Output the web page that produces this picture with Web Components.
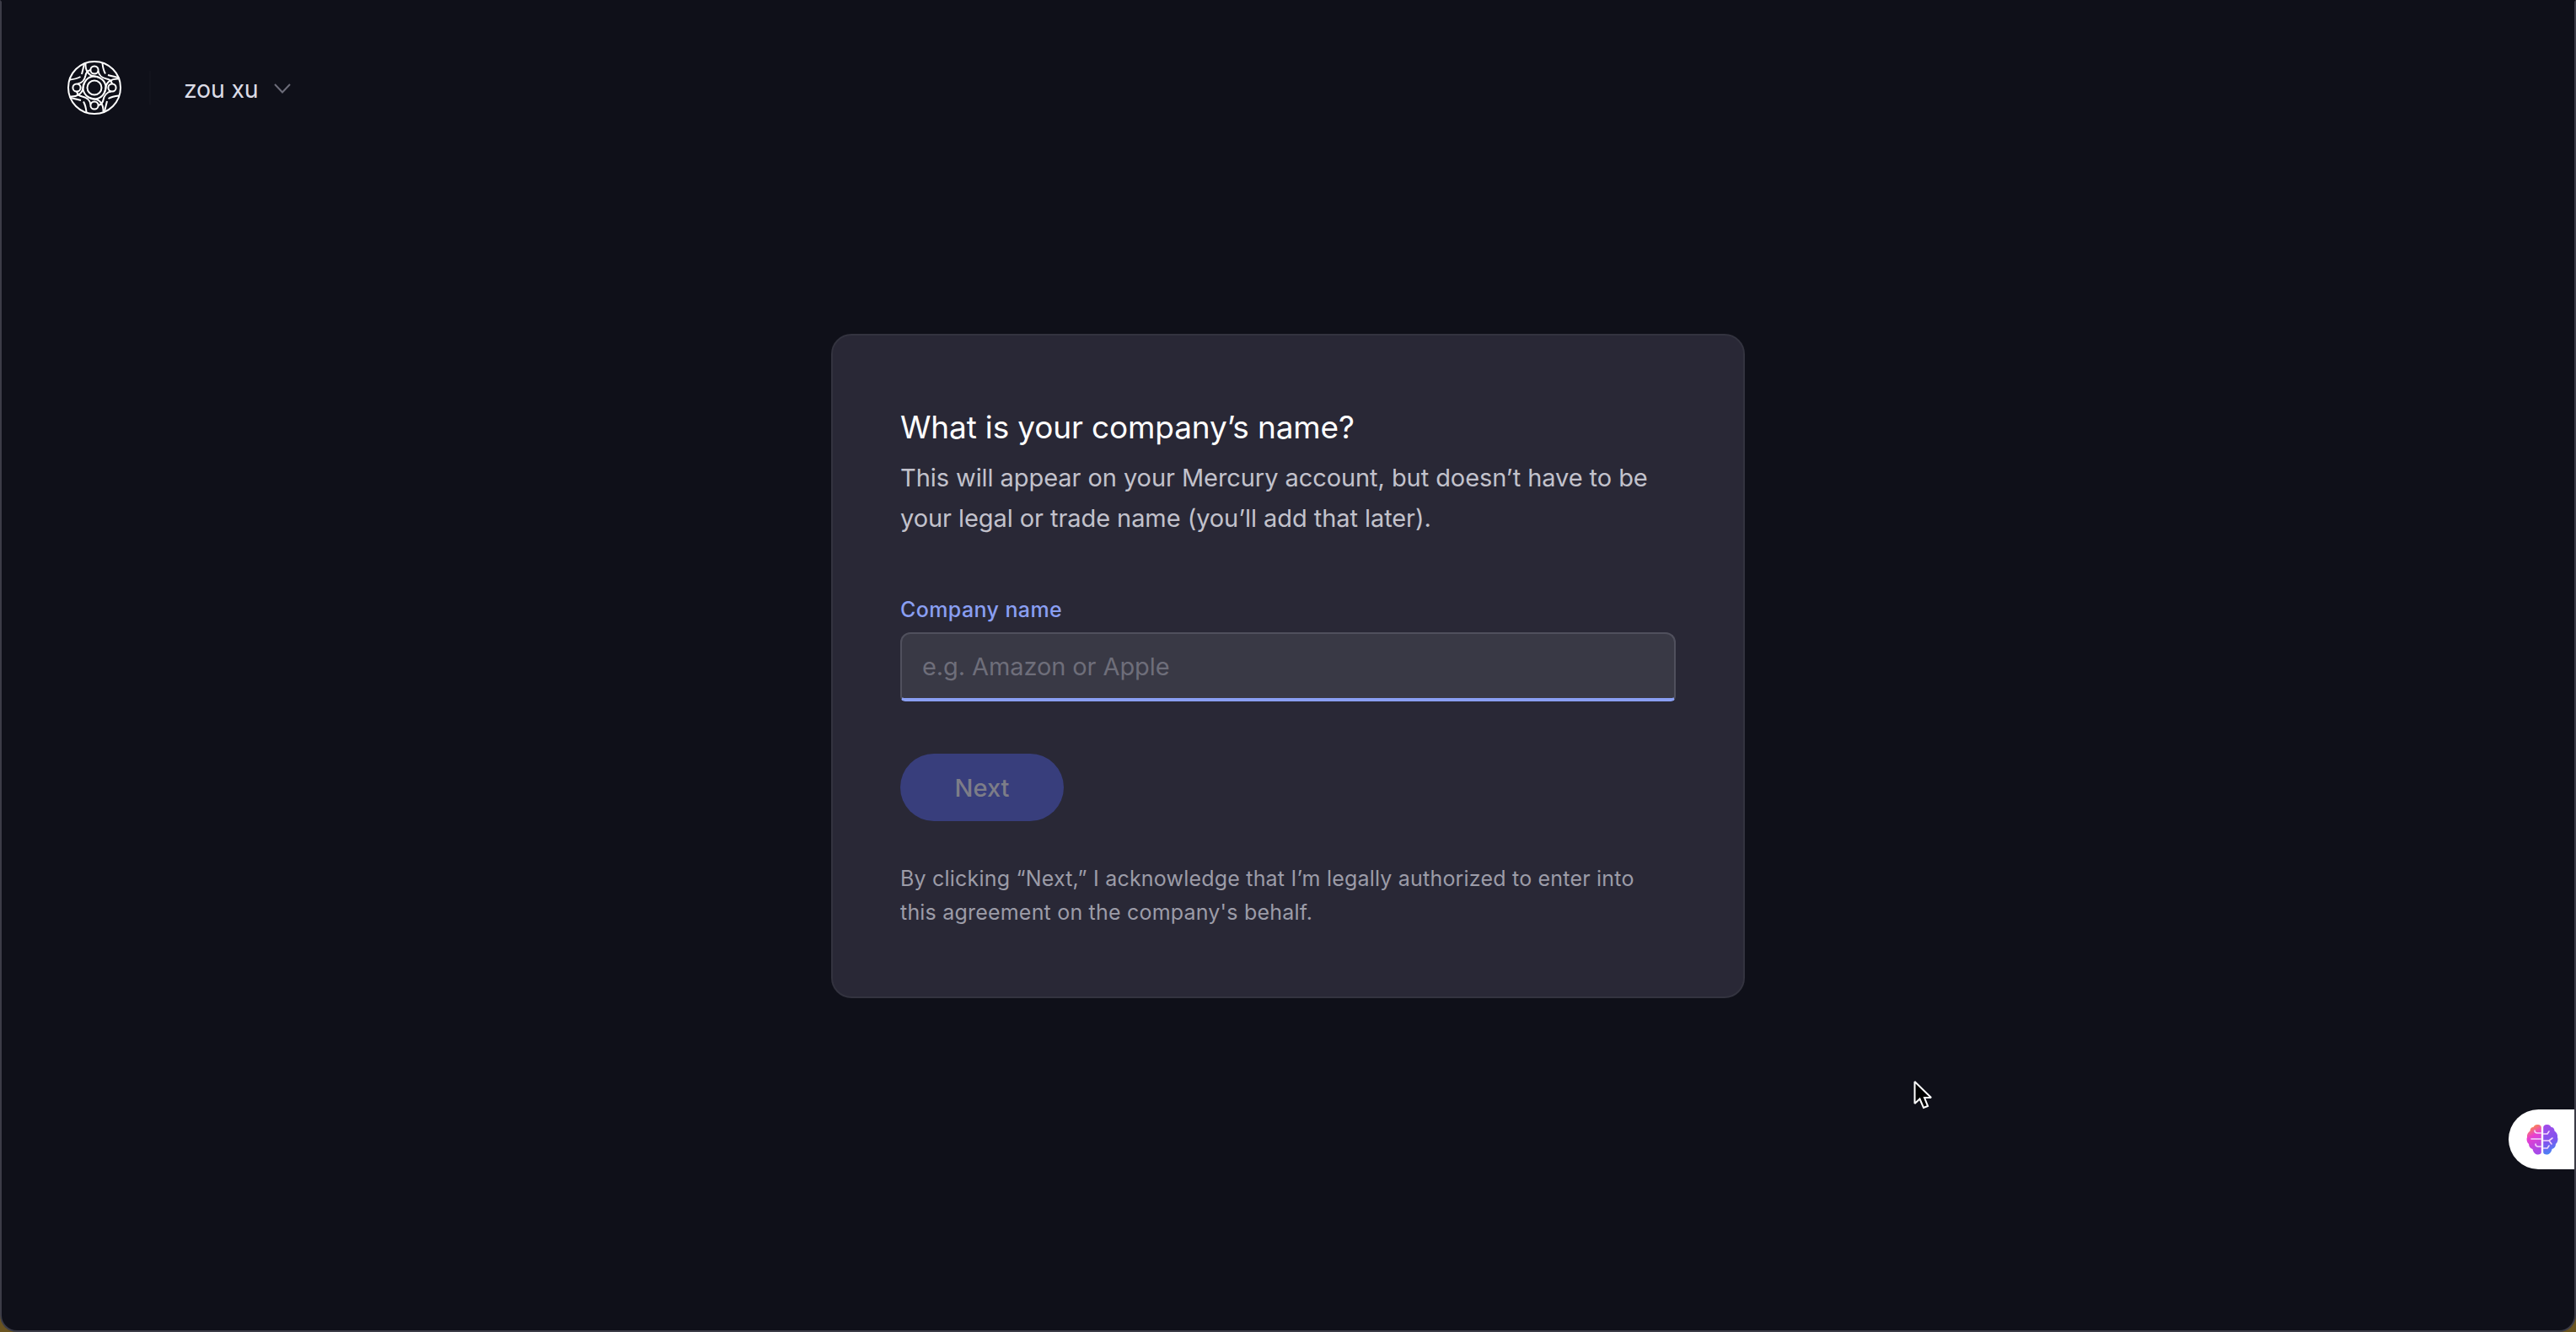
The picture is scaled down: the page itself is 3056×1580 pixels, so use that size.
<!DOCTYPE html>
<html lang="en">
<head>
<meta charset="utf-8">
<title>Company name</title>
<style>
  html, body { margin: 0; height: 100%; background: #6a5420; }
  body { font-family: Inter, "Liberation Sans", sans-serif; }
</style>
</head>
<body>
<app-window>
  <top-bar slot="header" name="zou xu"></top-bar>
  <onboarding-card>
    <span slot="title">What is your company’s name?</span>
    <span slot="intro">This will appear on your Mercury account, but doesn’t have to be your legal or trade name (you’ll add that later).</span>
    <text-field slot="field" label="Company name" placeholder="e.g. Amazon or Apple"></text-field>
    <pill-button slot="action">Next</pill-button>
    <span slot="legal">By clicking “Next,” I acknowledge that I’m legally authorized to enter into this agreement on the company's behalf.</span>
  </onboarding-card>
  <brain-tab slot="overlay"></brain-tab>
  <mouse-cursor slot="overlay"></mouse-cursor>
</app-window>

<script>
class AppWindow extends HTMLElement {
  connectedCallback() {
    this.attachShadow({ mode: "open" });
    this.shadowRoot.innerHTML = `
      <style>
        :host {
          display: grid;
          position: relative;
          box-sizing: border-box;
          width: 3056px;
          height: 1580px;
          overflow: hidden;
          background: #0f1019;
          border: 2px solid #3c3c47;
          border-top-color: #0f1019;
          border-radius: 0 0 20px 20px;
          grid-template: 1fr / 1fr;
        }
        .head { grid-area: 1 / 1; align-self: start; }
        .main { grid-area: 1 / 1; place-self: center; }
      </style>
      <div class="head"><slot name="header"></slot></div>
      <div class="main"><slot></slot></div>
      <slot name="overlay"></slot>
    `;
  }
}
customElements.define("app-window", AppWindow);

class TopBar extends HTMLElement {
  connectedCallback() {
    const name = this.getAttribute("name");
    this.attachShadow({ mode: "open" });
    this.shadowRoot.innerHTML = `
      <style>
        :host { display: block; }
        .bar {
          display: flex;
          align-items: center;
          height: 203px;
          padding-left: 77px;
        }
        svg.logo { width: 66px; height: 66px; flex: none; }
        .divider { width: 2px; height: 40px; margin-left: 32px; background: #12131c; }
        .user {
          display: flex;
          align-items: center;
          gap: 18px;
          margin: 3px 0 0 39px;
          font-size: 28.5px;
          color: #dcdce6;
          letter-spacing: -0.2px;
        }
        svg.chev { width: 20px; height: 12px; }
      </style>
      <div class="bar">
        <svg class="logo" viewBox="-33 -33 66 66" fill="none" stroke="#fff" stroke-width="2">
          <circle r="31"></circle>
          <circle r="8.5"></circle>
          <g id="u">
            <circle cy="-21" r="4.6"></circle>
            <path d="M4.500 -20C5 -15 9.500 -11.500 14.500 -10.500C17.500 -10 20 -8 21 -4.600"></path>
            <path d="M-10.500 -28.500C-11 -21 -7 -14 0 -13.500C7 -13 13 -8 13.500 -1C13.700 2 13 4 11.500 6.500"></path>
            <path d="M9.500 -29C10 -24 11 -20 13 -16.500M28.500 -12C24 -13 20 -14 16 -15"></path>
          </g>
          <use href="#u" transform="rotate(90)"></use>
          <use href="#u" transform="rotate(180)"></use>
          <use href="#u" transform="rotate(270)"></use>
        </svg>
        <div class="divider"></div>
        <div class="user">
          <span>${name}</span>
          <svg class="chev" viewBox="0 0 20 12" fill="none" stroke="#6c6c79" stroke-width="2"><path d="M1 1L10 10.500L19 1"></path></svg>
        </div>
      </div>
    `;
  }
}
customElements.define("top-bar", TopBar);

class OnboardingCard extends HTMLElement {
  connectedCallback() {
    this.attachShadow({ mode: "open" });
    this.shadowRoot.innerHTML = `
      <style>
        :host {
          display: block;
          box-sizing: border-box;
          width: 1084px;
          height: 788px;
          padding: 85px 80px 0;
          background: #292836;
          border: 2px solid #33333f;
          border-radius: 24px;
        }
        .title {
          font-size: 37px;
          line-height: 48px;
          color: #fff;
          letter-spacing: -0.15px;
        }
        .intro {
          margin-top: 12px;
          font-size: 29px;
          line-height: 48px;
          color: #c2c2cc;
          letter-spacing: -0.07px;
        }
        .field { margin-top: 68px; }
        .action { margin-top: 62px; }
        .legal {
          margin-top: 48px;
          max-width: 900px;
          font-size: 25px;
          line-height: 40px;
          color: #9c9ca8;
          letter-spacing: 0.2px;
        }
      </style>
      <div class="title"><slot name="title"></slot></div>
      <div class="intro"><slot name="intro"></slot></div>
      <div class="field"><slot name="field"></slot></div>
      <div class="action"><slot name="action"></slot></div>
      <div class="legal"><slot name="legal"></slot></div>
    `;
  }
}
customElements.define("onboarding-card", OnboardingCard);

class TextField extends HTMLElement {
  connectedCallback() {
    this.attachShadow({ mode: "open" });
    this.shadowRoot.innerHTML = `
      <style>
        :host { display: block; }
        .label {
          font-size: 25px;
          line-height: 32px;
          font-weight: 500;
          color: #8a9ff2;
          margin-bottom: 11px;
          letter-spacing: 0.4px;
        }
        .box {
          box-sizing: border-box;
          height: 82px;
          display: flex;
          align-items: center;
          padding: 0 24px;
          background: #393945;
          border: 2px solid #50505d;
          border-bottom: 4px solid #8a9ff2;
          border-radius: 12px 12px 6px 6px;
          font-size: 29px;
          color: #6e6e7a;
          letter-spacing: -0.1px;
        }
      </style>
      <div class="label">${this.getAttribute("label")}</div>
      <div class="box"><span>${this.getAttribute("placeholder")}</span></div>
    `;
  }
}
customElements.define("text-field", TextField);

class PillButton extends HTMLElement {
  connectedCallback() {
    this.attachShadow({ mode: "open" });
    this.shadowRoot.innerHTML = `
      <style>
        :host {
          display: inline-flex;
          align-items: center;
          justify-content: center;
          width: 194px;
          height: 80px;
          border-radius: 40px;
          background: #383e7c;
          color: #7d7d88;
          font-size: 29px;
          font-weight: 500;
        }
      </style>
      <slot></slot>
    `;
  }
}
customElements.define("pill-button", PillButton);

class BrainTab extends HTMLElement {
  connectedCallback() {
    this.attachShadow({ mode: "open" });
    this.shadowRoot.innerHTML = `
      <style>
        :host {
          position: absolute;
          right: 0;
          top: 1314px;
          width: 78px;
          height: 71px;
          display: flex;
          align-items: center;
          padding-left: 20px;
          box-sizing: border-box;
          background: #fff;
          border-radius: 36px 0 0 36px;
        }
        svg { width: 40px; height: 40px; }
      </style>
      <svg viewBox="-20 -20 40 40" fill="none">
        <defs>
          <linearGradient id="l" x1="-14" y1="-18" x2="2" y2="10" gradientUnits="userSpaceOnUse">
            <stop offset="0" stop-color="#ff9a2e"></stop>
            <stop offset="0.4" stop-color="#e93fd0"></stop>
            <stop offset="1" stop-color="#a64ae8"></stop>
          </linearGradient>
          <linearGradient id="r" x1="2" y1="-16" x2="16" y2="16" gradientUnits="userSpaceOnUse">
            <stop offset="0" stop-color="#a24be8"></stop>
            <stop offset="0.55" stop-color="#7f55ee"></stop>
            <stop offset="1" stop-color="#3f8df5"></stop>
          </linearGradient>
        </defs>
        <path fill="url(#l)" d="M-1.200 -15C-1.200 -17 -3.500 -18.500 -6 -18C-8.500 -18 -10 -16.500 -10.500 -15C-13 -15 -14.500 -13 -14.500 -10.500C-17 -9 -18.500 -6 -18 -3C-19 -1 -18.500 3 -16 5C-16 8 -14 10.500 -11.500 11C-11 14 -9 17 -6 17.500C-3.500 18 -1.200 16.500 -1.200 15Z"></path>
        <path fill="url(#r)" d="M1.200 -15C1.200 -17 3.500 -18.500 6 -18C8.500 -18 10 -16.500 10.500 -15C13 -15 14.500 -13 14.500 -10.500C17 -9 18.500 -6 18 -3C19 -1 18.500 3 16 5C16 8 14 10.500 11.500 11C11 14 9 17 6 17.500C3.500 18 1.200 16.500 1.200 15Z"></path>
        <g stroke="#f3d6fb" stroke-width="1.600" stroke-linecap="round" stroke-linejoin="round">
          <path d="M-1.500 -8H-6C-8 -8 -9 -9.500 -9 -11M-1.500 -1H-13M-1.500 8H-5C-7 8 -8 6.500 -8 5"></path>
          <path d="M1.500 -7H6L8 -10M1.500 1H8L12 -2M8 1L11 5M1.500 10H6L8 7"></path>
        </g>
      </svg>
    `;
  }
}
customElements.define("brain-tab", BrainTab);

class MouseCursor extends HTMLElement {
  connectedCallback() {
    this.attachShadow({ mode: "open" });
    this.shadowRoot.innerHTML = `
      <style>
        :host { position: absolute; left: 2267px; top: 1278px; width: 28px; height: 40px; }
        svg { display: block; width: 28px; height: 40px; }
      </style>
      <svg viewBox="0 0 28 40">
        <path d="M2.500 3V29L8.500 23.500L13 34L18 32L14 22H22Z" fill="#000" stroke="#fff" stroke-width="2" stroke-miterlimit="2"></path>
      </svg>
    `;
  }
}
customElements.define("mouse-cursor", MouseCursor);
</script>
</body>
</html>
